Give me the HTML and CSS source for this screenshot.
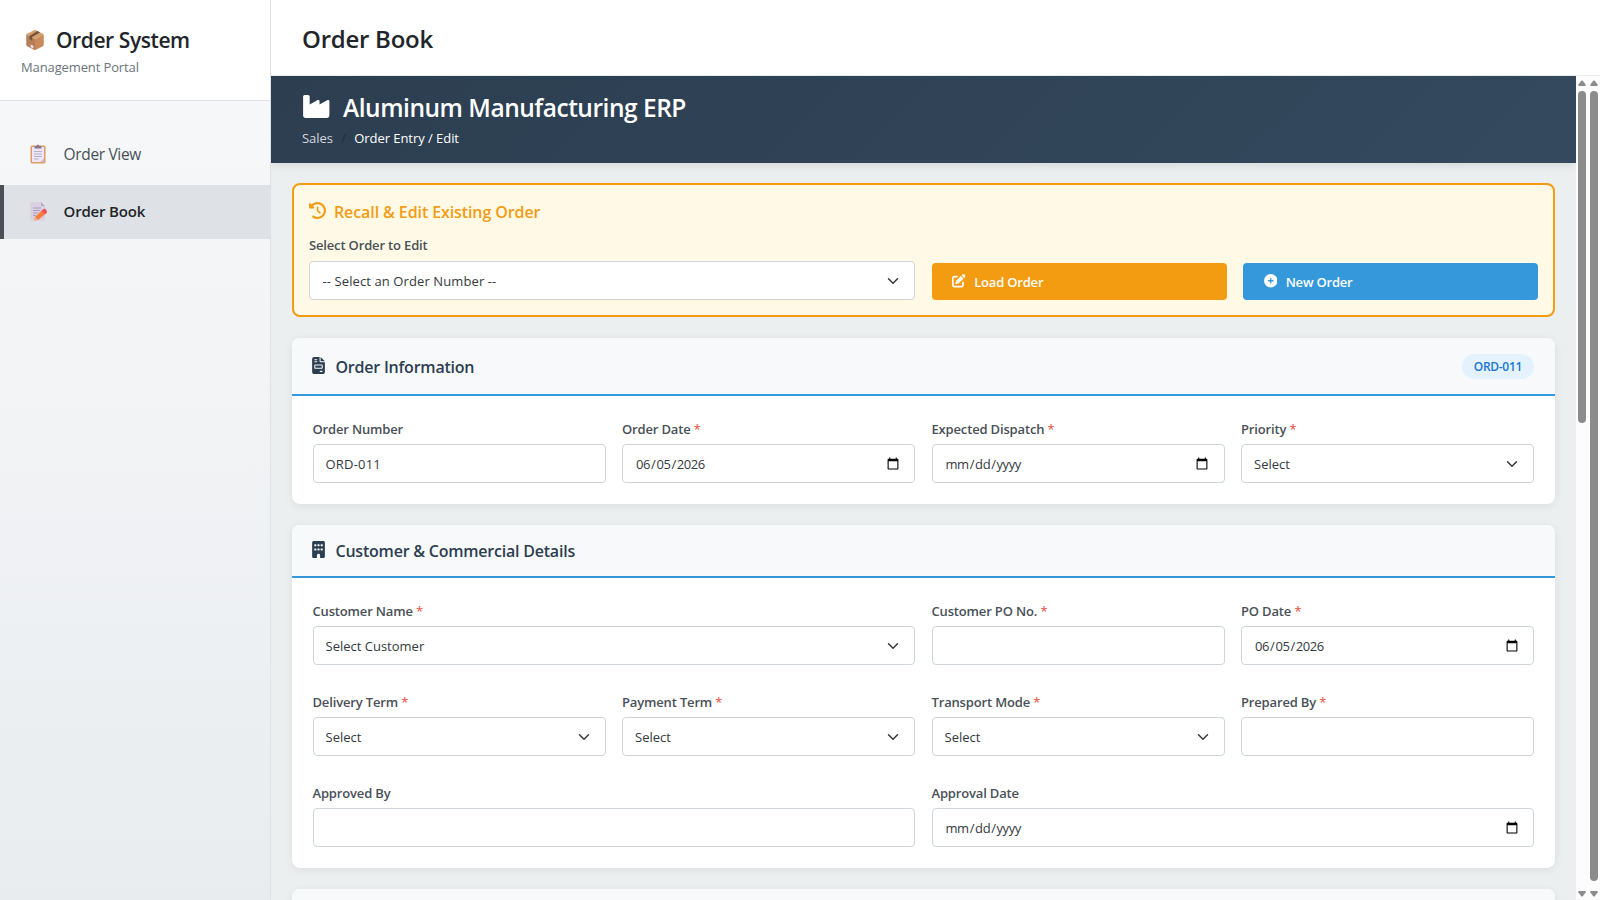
FILE: index.html
```html
<!DOCTYPE html>
<html lang="en">
<head>
    <meta charset="UTF-8">
    <meta name="viewport" content="width=device-width, initial-scale=1.0">
    <title>Order Book</title>
    <link rel="stylesheet" href="styles.css">
</head>
<body>
    <aside class="sidebar">
        <div class="sidebar-header">
            <div class="logo">
                <svg class="logo-icon" viewBox="0 0 32 32" preserveAspectRatio="none">
                    <path d="M16 1 30 7.5 16 14.5 2 7.5z" fill="#d3a06c"/>
                    <path d="M2 7.5 16 14.5V31L3.5 25Q2 24.3 2 22.5z" fill="#b87f56"/>
                    <path d="M30 7.5 16 14.5V31l12.5-6q1.5-.7 1.5-2.5z" fill="#c98b5a"/>
                    <path d="M20 3 24 5 11.5 11.6V17L7 14.5V10z" fill="#76533f"/>
                    <path d="M9 22.5l4.5 2v4L9 26.5z" fill="#e5dcec"/>
                </svg>
                <span>Order System</span>
            </div>
            <p class="subtitle">Management Portal</p>
        </div>
        <nav class="nav">
            <a class="nav-item">
                <svg class="nav-icon" viewBox="0 0 16 20">
                    <rect x=".5" y="1.5" width="15" height="18" rx="1.5" fill="#e29a67"/>
                    <path d="M2 3h12v11.5L10.5 18H2z" fill="#ece6f5"/>
                    <path d="M14 14.5V18h-3.5z" fill="#c9bfd9"/>
                    <path d="M4.5 4.5V3q0-1 1-1h1Q7 .5 8 .5T9.5 2h1q1 0 1 1v1.5z" fill="#83788f"/>
                    <path d="M4 7.5h8M4 10h8M4 12.5h8M4 15h4.5" stroke="#b3a8c4" stroke-width=".9"/>
                </svg>
                <span>Order View</span>
            </a>
            <a class="nav-item active">
                <svg class="nav-icon" viewBox="0 0 16 20">
                    <path d="M.5 1H11l4 4v14.5H.5z" fill="#d9d0e4"/>
                    <path d="M11 1v4h4z" fill="#b7abc6"/>
                    <path d="M3 7h8M3 9.5h7M3 12h5M3 14.5h3" stroke="#a89bb8" stroke-width=".9"/>
                    <path d="M13 8.5 16.5 12 8 19l-4 .5L5 16z" fill="#fb7d3c"/>
                    <path d="M13 8.5q1.5-1.3 3 0t.8 3.2l-1.6 1.5-3.7-3.5z" fill="#f4505e"/>
                    <path d="M5 16l3 3-4.2.7z" fill="#f0b98b"/>
                </svg>
                <span>Order Book</span>
            </a>
        </nav>
    </aside>

    <main class="main">
        <header class="topbar">
            <h1>Order Book</h1>
        </header>

        <div class="frame">
            <div class="content">
                <div class="banner">
                    <div class="banner-title">
                        <svg class="industry-icon" viewBox="0 32 512 448" fill="currentColor"><path d="M32 32C14.3 32 0 46.3 0 64V304v48 80c0 26.5 21.5 48 48 48H464c26.5 0 48-21.5 48-48V304 152.2c0-18.2-19.4-29.7-35.4-21.1L320 215.4V152.2c0-18.2-19.4-29.7-35.4-21.1L128 215.4V64c0-17.7-14.3-32-32-32H32z"/></svg>
                        <h2>Aluminum Manufacturing ERP</h2>
                    </div>
                    <div class="breadcrumb">
                        <span class="crumb">Sales</span>
                        <span class="divider">/</span>
                        <span>Order Entry / Edit</span>
                    </div>
                </div>

                <section class="recall">
                    <h3>
                        <svg class="recall-icon" viewBox="0 0 512 512" fill="currentColor"><path d="M75 75L41 41C25.9 25.9 0 36.6 0 57.9V168c0 13.3 10.7 24 24 24H134.1c21.4 0 32.1-25.9 17-41l-30.8-30.8C155 85.5 203 64 256 64c106 0 192 86 192 192s-86 192-192 192c-40.8 0-78.6-12.7-109.7-34.4c-14.5-10.1-34.4-6.6-44.6 7.9s-6.6 34.4 7.9 44.6C151.2 495 201.7 512 256 512c141.4 0 256-114.6 256-256S397.4 0 256 0C185.3 0 121.3 28.7 75 75zm181 53c-13.3 0-24 10.7-24 24V256c0 6.4 2.5 12.5 7 17l72 72c9.4 9.4 24.6 9.4 33.9 0s9.4-24.6 0-33.9l-65-65V152c0-13.3-10.7-24-24-24z"/></svg>
                        <span>Recall &amp; Edit Existing Order</span>
                    </h3>
                    <div class="form-grid">
                        <div class="field span-2">
                            <label>Select Order to Edit</label>
                            <select class="control order-select"><option>-- Select an Order Number --</option></select>
                        </div>
                        <button class="btn btn-warning">
                            <svg class="btn-icon" viewBox="0 0 512 512" fill="currentColor"><path d="M471.6 21.7c-21.9-21.9-57.3-21.9-79.2 0L362.3 51.7l97.9 97.9 30.1-30.1c21.9-21.9 21.9-57.3 0-79.2L471.6 21.7zm-299.2 220c-6.1 6.1-10.8 13.6-13.5 21.9l-29.6 88.8c-2.9 8.6-.6 18.1 5.8 24.6s15.9 8.7 24.6 5.8l88.8-29.6c8.2-2.7 15.7-7.4 21.9-13.5L437.7 172.3 339.7 74.3 172.4 241.7zM96 64C43 64 0 107 0 160V416c0 53 43 96 96 96H352c53 0 96-43 96-96V320c0-17.7-14.3-32-32-32s-32 14.3-32 32v96c0 17.7-14.3 32-32 32H96c-17.7 0-32-14.3-32-32V160c0-17.7 14.3-32 32-32h96c17.7 0 32-14.3 32-32s-14.3-32-32-32H96z"/></svg>
                            Load Order
                        </button>
                        <button class="btn btn-primary">
                            <svg class="btn-icon" viewBox="0 0 512 512" fill="currentColor"><path d="M256 512A256 256 0 1 0 256 0a256 256 0 1 0 0 512zM232 344V280H168c-13.3 0-24-10.7-24-24s10.7-24 24-24h64V168c0-13.3 10.7-24 24-24s24 10.7 24 24v64h64c13.3 0 24 10.7 24 24s-10.7 24-24 24H280v64c0 13.3-10.7 24-24 24s-24-10.7-24-24z"/></svg>
                            New Order
                        </button>
                    </div>
                </section>

                <section class="card order-info">
                    <div class="card-header">
                        <h3>
                            <svg class="card-icon" viewBox="0 0 384 512" fill="currentColor"><path d="M64 0C28.7 0 0 28.7 0 64V448c0 35.3 28.7 64 64 64H320c35.3 0 64-28.7 64-64V160H256c-17.7 0-32-14.3-32-32V0H64zM256 0V128H384L256 0zM80 64h64c8.8 0 16 7.2 16 16s-7.2 16-16 16H80c-8.8 0-16-7.2-16-16s7.2-16 16-16zm0 64h64c8.8 0 16 7.2 16 16s-7.2 16-16 16H80c-8.8 0-16-7.2-16-16s7.2-16 16-16zm16 96H288c17.7 0 32 14.3 32 32v64c0 17.7-14.3 32-32 32H96c-17.7 0-32-14.3-32-32V256c0-17.7 14.3-32 32-32zm0 32v64H288V256H96zM240 416h64c8.8 0 16 7.2 16 16s-7.2 16-16 16H240c-8.8 0-16-7.2-16-16s7.2-16 16-16z"/></svg>
                            <span>Order Information</span>
                        </h3>
                        <span class="badge">ORD-011</span>
                    </div>
                    <div class="card-body form-grid">
                        <div class="field">
                            <label>Order Number</label>
                            <input class="control" type="text" value="ORD-011">
                        </div>
                        <div class="field">
                            <label>Order Date <span class="required">*</span></label>
                            <input class="control" type="date" value="2026-06-05">
                        </div>
                        <div class="field">
                            <label>Expected Dispatch <span class="required">*</span></label>
                            <input class="control" type="date">
                        </div>
                        <div class="field">
                            <label>Priority <span class="required">*</span></label>
                            <select class="control"><option>Select</option></select>
                        </div>
                    </div>
                </section>

                <section class="card">
                    <div class="card-header">
                        <h3>
                            <svg class="card-icon" viewBox="0 0 384 512" fill="currentColor"><path d="M48 0C21.5 0 0 21.5 0 48V464c0 26.5 21.5 48 48 48h96V432c0-26.5 21.5-48 48-48s48 21.5 48 48v80h96c26.5 0 48-21.5 48-48V48c0-26.5-21.5-48-48-48H48zM64 240c0-8.8 7.2-16 16-16h32c8.8 0 16 7.2 16 16v32c0 8.8-7.2 16-16 16H80c-8.8 0-16-7.2-16-16V240zm112-16h32c8.8 0 16 7.2 16 16v32c0 8.8-7.2 16-16 16H176c-8.8 0-16-7.2-16-16V240c0-8.8 7.2-16 16-16zm80 16c0-8.8 7.2-16 16-16h32c8.8 0 16 7.2 16 16v32c0 8.8-7.2 16-16 16H272c-8.8 0-16-7.2-16-16V240zM80 96h32c8.8 0 16 7.2 16 16v32c0 8.8-7.2 16-16 16H80c-8.8 0-16-7.2-16-16V112c0-8.8 7.2-16 16-16zm80 16c0-8.8 7.2-16 16-16h32c8.8 0 16 7.2 16 16v32c0 8.8-7.2 16-16 16H176c-8.8 0-16-7.2-16-16V112zM272 96h32c8.8 0 16 7.2 16 16v32c0 8.8-7.2 16-16 16H272c-8.8 0-16-7.2-16-16V112c0-8.8 7.2-16 16-16z"/></svg>
                            <span>Customer &amp; Commercial Details</span>
                        </h3>
                    </div>
                    <div class="card-body form-grid">
                        <div class="field span-2">
                            <label>Customer Name <span class="required">*</span></label>
                            <select class="control"><option>Select Customer</option></select>
                        </div>
                        <div class="field">
                            <label>Customer PO No. <span class="required">*</span></label>
                            <input class="control" type="text">
                        </div>
                        <div class="field">
                            <label>PO Date <span class="required">*</span></label>
                            <input class="control" type="date" value="2026-06-05">
                        </div>
                        <div class="field">
                            <label>Delivery Term <span class="required">*</span></label>
                            <select class="control"><option>Select</option></select>
                        </div>
                        <div class="field">
                            <label>Payment Term <span class="required">*</span></label>
                            <select class="control"><option>Select</option></select>
                        </div>
                        <div class="field">
                            <label>Transport Mode <span class="required">*</span></label>
                            <select class="control"><option>Select</option></select>
                        </div>
                        <div class="field">
                            <label>Prepared By <span class="required">*</span></label>
                            <input class="control" type="text">
                        </div>
                        <div class="field span-2">
                            <label>Approved By</label>
                            <input class="control" type="text">
                        </div>
                        <div class="field span-2">
                            <label>Approval Date</label>
                            <input class="control" type="date">
                        </div>
                    </div>
                </section>

                <section class="card">
                    <div class="card-header"></div>
                </section>
            </div>

            <div class="scrollbar">
                <svg class="arrow" viewBox="0 0 8 6"><path d="M3.2.8Q4 0 4.8.8L7.7 4.8Q8 6 7 6H1Q0 6 .3 4.8z"/></svg>
                <div class="track"><div class="thumb thumb-inner"></div></div>
                <svg class="arrow down" viewBox="0 0 8 6"><path d="M3.2.8Q4 0 4.8.8L7.7 4.8Q8 6 7 6H1Q0 6 .3 4.8z"/></svg>
            </div>
            <div class="scrollbar">
                <svg class="arrow" viewBox="0 0 8 6"><path d="M3.2.8Q4 0 4.8.8L7.7 4.8Q8 6 7 6H1Q0 6 .3 4.8z"/></svg>
                <div class="track"><div class="thumb thumb-outer"></div></div>
                <svg class="arrow down" viewBox="0 0 8 6"><path d="M3.2.8Q4 0 4.8.8L7.7 4.8Q8 6 7 6H1Q0 6 .3 4.8z"/></svg>
            </div>
        </div>
    </main>
</body>
</html>
```

FILE: styles.css
```css
* {
    box-sizing: border-box;
    margin: 0;
    padding: 0;
}

body {
    display: flex;
    height: 100vh;
    overflow: hidden;
    font-family: "Open Sans", "Noto Sans", sans-serif;
    font-size: 13px;
    color: #212529;
    background: #fff;
}

svg {
    display: block;
    flex-shrink: 0;
}

/* Sidebar */
.sidebar {
    width: 271px;
    flex-shrink: 0;
    background: linear-gradient(180deg, #f8f9fa, #e9ecef);
    border-right: 1px solid #dee2e6;
}

.sidebar-header {
    height: 101px;
    padding: 26px 21px 0;
    background: #fff;
    border-bottom: 1px solid #dee2e6;
}

.logo {
    display: flex;
    align-items: center;
    gap: 11px;
    height: 28px;
    padding-left: 4px;
    font-size: 21px;
    font-weight: 600;
    letter-spacing: -0.42px;
}

.logo-icon {
    width: 20px;
    height: 22px;
}

.subtitle {
    margin-top: 4px;
    line-height: 18px;
    letter-spacing: -0.12px;
    color: #6c757d;
}

.nav {
    display: flex;
    flex-direction: column;
    gap: 3px;
    padding-top: 26px;
}

.nav-item {
    display: flex;
    align-items: center;
    gap: 17.5px;
    height: 54.5px;
    padding-left: 26px;
    border-left: 4px solid transparent;
    font-size: 15.5px;
    letter-spacing: -0.33px;
    color: #495057;
}

.nav-item.active {
    padding-bottom: 1px;
    background: #dee2e6;
    border-left-color: #495057;
    color: #212529;
    font-size: 15px;
    font-weight: 600;
    letter-spacing: -0.18px;
}

.nav-icon {
    width: 16px;
    height: 20px;
    overflow: visible;
}

/* Main column */
.main {
    display: flex;
    flex-direction: column;
    flex: 1;
    min-width: 0;
}

.topbar {
    height: 76px;
    flex-shrink: 0;
    padding: 21px 31px 0;
    border-bottom: 1px solid #e9ecef;
}

.topbar h1 {
    font-size: 24px;
    font-weight: 600;
    line-height: 36px;
    letter-spacing: -0.25px;
}

.frame {
    display: flex;
    flex: 1;
    min-height: 0;
}

.content {
    flex: 1;
    overflow: hidden;
    background: #ebeff0;
}

.banner {
    height: 86.5px;
    padding: 13px 31px 0;
    background: linear-gradient(135deg, #2c3e50, #34495e);
    box-shadow: 0 2px 10px rgba(0, 0, 0, 0.1);
    color: #fff;
}

.banner-title {
    display: flex;
    align-items: center;
    gap: 13.5px;
    height: 36px;
}

.banner-title h2 {
    font-size: 24.5px;
    font-weight: 600;
    letter-spacing: -0.48px;
}

.industry-icon {
    width: 26.5px;
    height: 23px;
    margin: -1px 0 0 1px;
}

.breadcrumb {
    display: flex;
    gap: 8.3px;
    margin-top: 4px;
    line-height: 18px;
    letter-spacing: -0.05px;
}

.crumb {
    color: #d5d8dc;
}

.divider {
    color: #212b36;
}

/* Recall panel */
.recall {
    height: 134px;
    margin: 20.5px 21px 0;
    padding: 15px 15px 0;
    background: #fff9e6;
    border: 2px solid #f39c12;
    border-radius: 8px;
}

.recall h3 {
    display: flex;
    align-items: center;
    gap: 8px;
    height: 24px;
    font-size: 16px;
    font-weight: 600;
    letter-spacing: -0.1px;
    color: #f39c12;
}

.recall-icon {
    width: 17px;
    height: 17px;
    margin-top: -3px;
}

.recall .form-grid {
    align-items: end;
    margin-top: 11px;
}

/* Forms */
.form-grid {
    display: grid;
    grid-template-columns: repeat(4, minmax(0, 1fr));
    gap: 25px 16.5px;
}

.span-2 {
    grid-column: span 2;
}

.field label {
    display: block;
    margin-bottom: 5.5px;
    padding-top: 1.5px;
    font-weight: 600;
    line-height: 20px;
    letter-spacing: -0.16px;
    color: #495057;
}

.recall .field label {
    margin-bottom: 6px;
    padding-top: 0;
}

.required {
    font-weight: 400;
    color: #e74c3c;
}

.control {
    display: block;
    width: 100%;
    height: 39px;
    padding: 0 12px;
    border: 1px solid #ced4da;
    border-radius: 4px;
    background-color: #fff;
    color: #343a40;
    font-family: inherit;
    font-size: 13px;
}

input.control {
    letter-spacing: 0.2px;
}

input[type="date"].control {
    padding-right: 12.5px;
    letter-spacing: -0.42px;
}

input[type="date"]::-webkit-calendar-picker-indicator {
    width: 14px;
    height: 14px;
}

select.control {
    appearance: none;
    background-image: url("data:image/svg+xml,%3Csvg xmlns='http://www.w3.org/2000/svg' viewBox='0 0 16 16'%3E%3Cpath fill='none' stroke='%23343a40' stroke-linecap='round' stroke-linejoin='round' stroke-width='2' d='m2 5 6 6 6-6'/%3E%3C/svg%3E");
    background-repeat: no-repeat;
    background-position: right 14px center;
    background-size: 14px 12px;
}

.control.order-select {
    padding-left: 12.5px;
    letter-spacing: 0.1px;
}

.btn {
    display: flex;
    align-items: center;
    gap: 8.5px;
    height: 37px;
    padding-left: 20.5px;
    border: none;
    border-radius: 4px;
    color: #fff;
    font-family: inherit;
    font-size: 13px;
    font-weight: 600;
    letter-spacing: -0.2px;
}

.btn-warning {
    background: #f39c12;
}

.btn-primary {
    background: #3498db;
}

.btn-icon {
    width: 13.5px;
    height: 13.5px;
    margin-top: -1px;
}

/* Cards */
.card {
    margin: 21px 21px 0;
    background: #fff;
    border-radius: 8px;
    box-shadow: 0 2px 10px rgba(0, 0, 0, 0.07);
    overflow: hidden;
}

.card-header {
    display: flex;
    align-items: center;
    justify-content: space-between;
    height: 53px;
    padding: 1px 21px 0 20px;
    background: #f8f9fb;
    border-bottom: 2px solid #3498db;
}

.order-info .card-header {
    height: 58px;
}

.card-header h3 {
    display: flex;
    align-items: center;
    gap: 10.5px;
    font-size: 16px;
    font-weight: 600;
    letter-spacing: -0.22px;
    color: #2c3e50;
}

.card-icon {
    width: 13px;
    height: 17px;
    margin-top: -3px;
}

.badge {
    padding: 0 12px;
    border-radius: 13px;
    background: #e3f2fd;
    color: #1976d2;
    font-size: 12px;
    font-weight: 600;
    line-height: 25px;
    letter-spacing: -0.3px;
}

.card-body {
    padding: 21px 21px 21px 20.5px;
}

/* Scrollbars */
.scrollbar {
    display: flex;
    flex-direction: column;
    align-items: center;
    justify-content: space-between;
    width: 12px;
    padding: 4px 0 3px;
    background: #fcfcfc;
}

.arrow {
    width: 8px;
    height: 6px;
    fill: #8b8b8b;
}

.down {
    transform: rotate(180deg);
}

.track {
    flex: 1;
    padding: 5px 0 10px;
}

.thumb {
    width: 8px;
    border-radius: 4px;
    background: #8b8b8b;
}

.thumb-inner {
    height: 332px;
}

.thumb-outer {
    height: 100%;
}
```
